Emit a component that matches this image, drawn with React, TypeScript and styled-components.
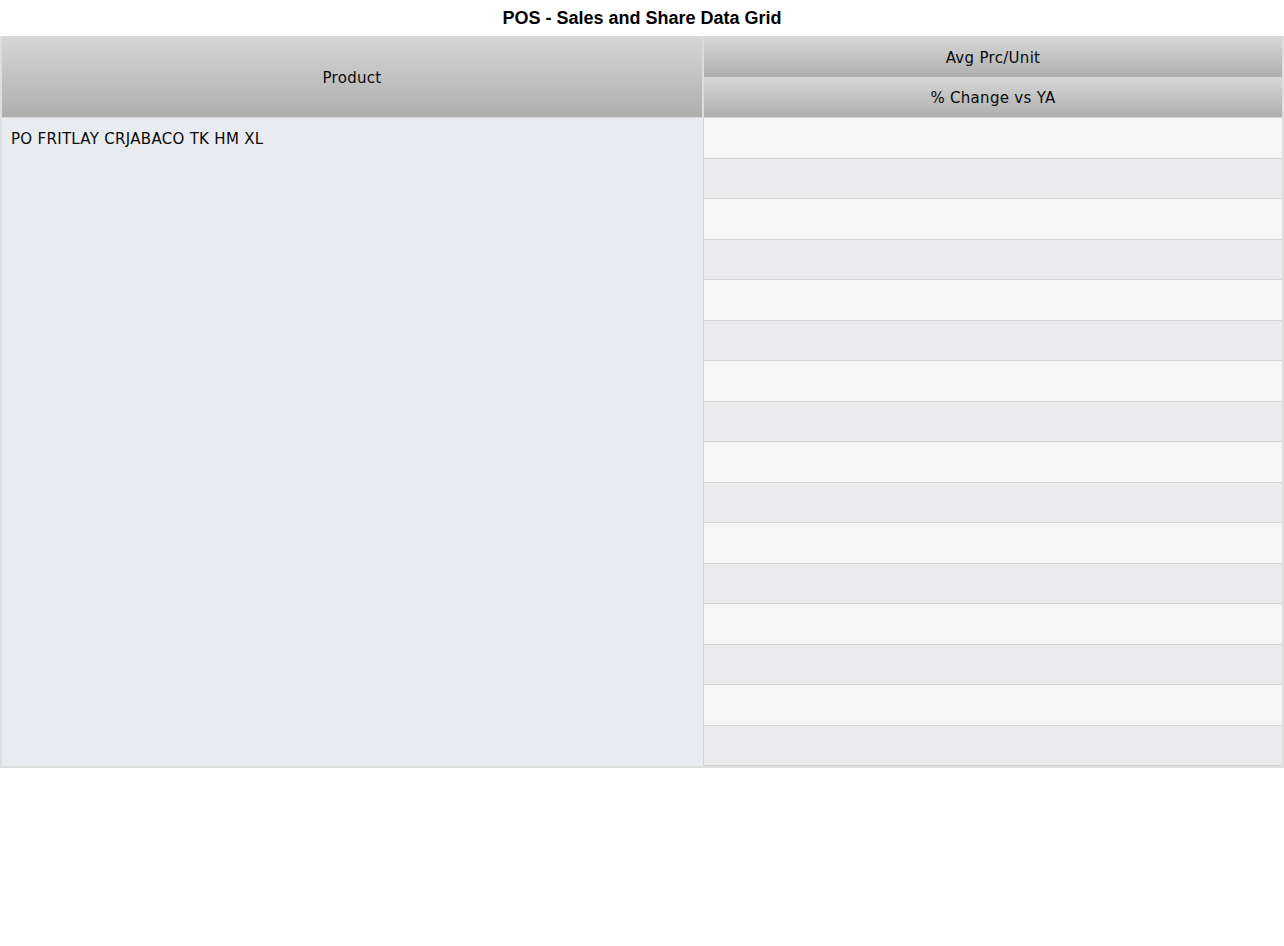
import React from 'react';
import styled, { createGlobalStyle } from 'styled-components';

const GlobalStyle = createGlobalStyle`
  html, body {
    margin: 0;
    padding: 0;
    background: #fff;
  }
`;

const Page = styled.div`
  width: 1284px;
`;

const Title = styled.h2`
  margin: 0;
  height: 36px;
  line-height: 36px;
  text-align: center;
  font-family: "Liberation Sans", Arial, sans-serif;
  font-size: 18px;
  font-weight: 700;
  color: #000;
`;

const Grid = styled.div`
  display: grid;
  grid-template-columns: 702px 1fr;
  grid-template-rows: 40px 40px repeat(16, 40.5px);
  border: 2px solid #dedede;
  border-top-color: #dadada;
  font-family: "DejaVu Sans", Verdana, sans-serif;
  font-size: 15px;
  letter-spacing: 0.3px;
  color: #0a0a0a;
`;

const HeaderCell = styled.div<{ $span?: number }>`
  grid-row: span ${p => p.$span ?? 1};
  display: flex;
  align-items: center;
  justify-content: center;
  background: linear-gradient(#d6d6d6, #aeaeae);
  border-right: 2px solid #dcdcdc;
  border-bottom: 1px solid #d6d6d6;
  box-sizing: border-box;
`;

const SubHeaderCell = styled(HeaderCell)`
  border-right: none;
`;

const ProductCell = styled.div`
  grid-row: span 16;
  background: #e8ebf0;
  border-right: 1px solid #d4d4d4;
  padding: 11px 9px;
  box-sizing: border-box;
  line-height: 20px;
`;

const DataCell = styled.div<{ $odd: boolean }>`
  grid-column: 2;
  background: ${p => (p.$odd ? '#f6f6f6' : '#ebebed')};
  border-bottom: 1px solid #d4d4d4;
  box-sizing: border-box;
`;

const rows = Array.from({ length: 16 }, (_, i) => i);

export default function App() {
  return (
    <Page>
      <GlobalStyle />
      <Title>POS - Sales and Share Data Grid</Title>
      <Grid>
        <HeaderCell $span={2}>Product</HeaderCell>
        <SubHeaderCell>Avg Prc/Unit</SubHeaderCell>
        <SubHeaderCell>% Change vs YA</SubHeaderCell>
        <ProductCell>PO FRITLAY CRJABACO TK HM XL</ProductCell>
        {rows.map(i => (
          <DataCell key={i} $odd={i % 2 === 0} />
        ))}
      </Grid>
    </Page>
  );
}
